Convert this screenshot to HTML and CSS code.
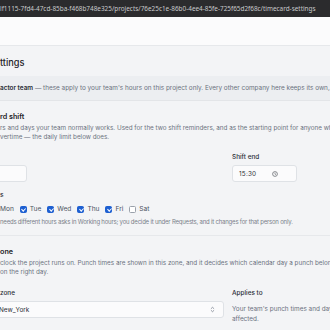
FILE: index.html
```html
<!DOCTYPE html>
<html>
<head>
<meta charset="utf-8">
<link rel="stylesheet" href="styles.css">
</head>
<body>
<div class="urlbar">lf1115-7fd4-47cd-85ba-f468b748e325/projects/76e25c1e-86b0-4ee4-85fe-725f65d2f68c/timecard-settings</div>
<div class="topnav"></div>
<main class="main">
  <h1 class="page-title">ttings</h1>
  <div class="note"><b>actor team</b> — these apply to your team's hours on this project only. Every other company here keeps its own, and</div>
  <section class="card">
    <div class="section">
      <h2 class="section-title">rd shift</h2>
      <p class="desc">rs and days your team normally works. Used for the two shift reminders, and as the starting point for anyone who<br>vertime — the daily limit below does.</p>
      <div class="grid two">
        <div class="field">
          <label class="label hidden-label">Shift start</label>
          <div class="input left-input"></div>
        </div>
        <div class="field">
          <label class="label">Shift end</label>
          <div class="input time-input"><span class="time">15:30</span>
            <svg class="clock" viewBox="0 0 10 10" width="6" height="6"><circle cx="5" cy="5" r="4" fill="none" stroke="#5f6368" stroke-width="1.2"/><path d="M5 2.8V5.2L6.4 6.2" fill="none" stroke="#5f6368" stroke-width="1.1"/></svg>
          </div>
        </div>
      </div>
      <div class="days-label">s</div>
      <div class="days">
        <span class="day">Mon</span>
        <span class="day"><span class="cb on"></span>Tue</span>
        <span class="day"><span class="cb on"></span>Wed</span>
        <span class="day"><span class="cb on"></span>Thu</span>
        <span class="day"><span class="cb on"></span>Fri</span>
        <span class="day"><span class="cb"></span>Sat</span>
      </div>
      <p class="help">needs different hours asks in Working hours; you decide it under Requests, and it changes for that person only.</p>
    </div>
    <div class="section tz">
      <h2 class="section-title">one</h2>
      <p class="desc">clock the project runs on. Punch times are shown in this zone, and it decides which calendar day a punch belongs to, so<br>on the right day.</p>
      <div class="grid two">
        <div class="field">
          <label class="label">zone</label>
          <div class="input select"><span>New_York</span>
            <svg class="chev" viewBox="0 0 8 10" width="5" height="7"><path d="M1.5 3.8L4 1.5L6.5 3.8M1.5 6.2L4 8.5L6.5 6.2" fill="none" stroke="#6b7280" stroke-width="1.1"/></svg>
          </div>
        </div>
        <div class="field">
          <label class="label">Applies to</label>
          <p class="applies">Your team's punch times and day totals are<br>affected.</p>
        </div>
      </div>
    </div>
  </section>
</main>
</body>
</html>
```
FILE: styles.css
```css
* { box-sizing: border-box; margin: 0; padding: 0; }
html, body { width: 330px; height: 330px; overflow: hidden; }
body {
  font-family: Inter, "Noto Sans", sans-serif;
  background: #f3f4f6;
  color: #1f2328;
}
.urlbar {
  height: 17px;
  background: #2b2b2d;
  color: #c9cacc;
  font-family: "Noto Sans", "Liberation Sans", sans-serif;
  font-size: 6.4px;
  line-height: 17px;
  white-space: nowrap;
  overflow: hidden;
  padding-left: 0;
}
.topnav {
  height: 29px;
  background: #fbfbfc;
  border-bottom: 1px solid #e6e8eb;
}
.main { background: #f3f4f6; }
.page-title {
  font-size: 9.2px;
  font-weight: 500;
  line-height: 12px;
  padding-top: 11px;
  height: 30px;
  color: #1f2328;
}
.note {
  background: #eceef1;
  height: 25px;
  line-height: 24px;
  font-size: 6.4px;
  color: #6b7280;
  white-space: nowrap;
  overflow: hidden;
  border-bottom: 1px solid #e3e5e8;
}
.note b { color: #2b2f36; font-weight: 600; }
.card { background: #f3f4f6; }
.section { padding-top: 11px; padding-bottom: 9px; border-bottom: 1px solid #e6e8eb; }
.section-title {
  font-size: 7.2px;
  font-weight: 600;
  line-height: 10px;
  color: #1f2328;
}
.desc {
  margin-top: 2px;
  font-size: 6.3px;
  line-height: 9px;
  color: #6b7280;
  white-space: nowrap;
}
.grid.two {
  display: grid;
  grid-template-columns: 224px 1fr;
  column-gap: 8px;
}
.section > .grid.two { margin-top: 11px; }
.field { display: flex; flex-direction: column; gap: 3px; }
.label { font-size: 6.4px; line-height: 9px; color: #2b2f36; font-weight: 500; }
.hidden-label { visibility: hidden; }
.input {
  height: 17px;
  background: #fbfbfc;
  border: 1px solid #dfe2e6;
  border-radius: 3px;
  display: flex;
  align-items: center;
  font-size: 6.4px;
  color: #2b2f36;
}
.left-input { width: 67px; margin-left: -40px; }
.time-input { width: 65px; padding-left: 6px; gap: 6px; }
.time { letter-spacing: 0.2px; }
.clock { margin-left: 10px; }
.days-label { margin-top: 9px; font-size: 6.6px; line-height: 9px; color: #2b2f36; font-weight: 500; }
.days { display: flex; gap: 6px; margin-top: 5px; font-size: 6.6px; line-height: 9px; color: #4b5260; }
.day { display: flex; align-items: center; gap: 3px; }
.cb {
  width: 7px; height: 7px;
  border: 1px solid #9aa1ab;
  border-radius: 1.5px;
  background: #fff;
  position: relative;
}
.cb.on { background: #1d5fd1; border-color: #1d5fd1; }
.cb.on::after {
  content: "";
  position: absolute;
  left: 1.6px; top: 0.3px;
  width: 1.6px; height: 3.4px;
  border: solid #fff;
  border-width: 0 1px 1px 0;
  transform: rotate(45deg);
}
.help { margin-top: 4px; font-size: 6px; letter-spacing: -0.2px; line-height: 8px; color: #7a808a; white-space: nowrap; }
.tz { padding-top: 11px; border-bottom: 1px solid #e6e8eb; }
.tz .grid.two { margin-top: 12px; }
.select { margin-left: -40px; width: 264px; padding-left: 38px; justify-content: space-between; padding-right: 8px; }
.applies { font-size: 6.4px; line-height: 10px; color: #6b7280; white-space: nowrap; margin-top: 3px; }
```
